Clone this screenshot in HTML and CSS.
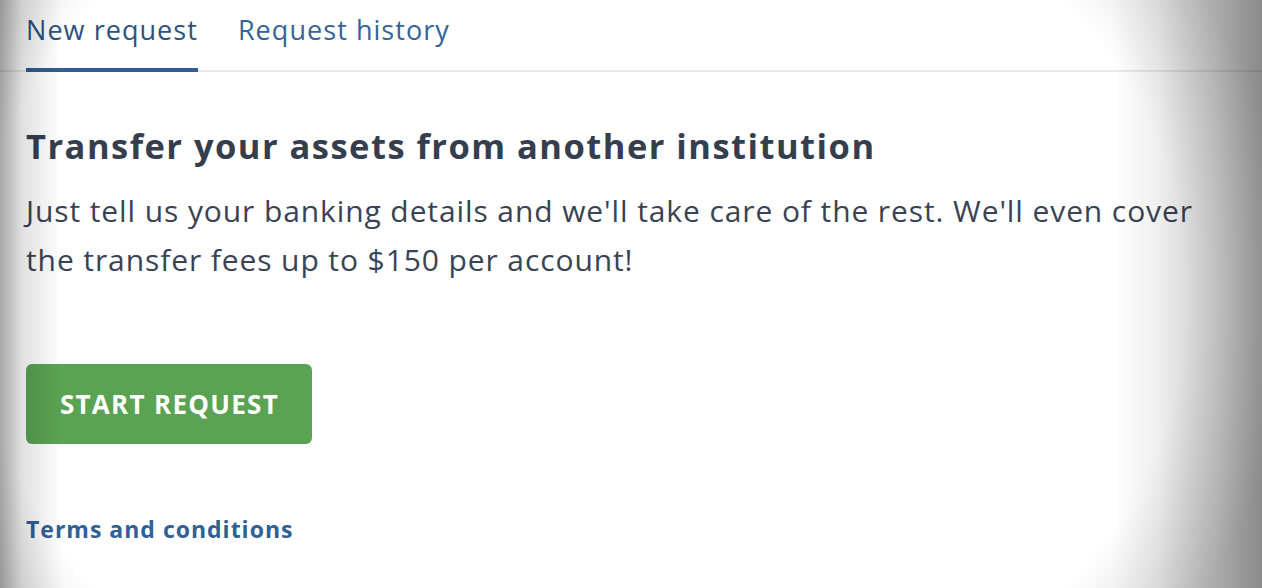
FILE: index.html
```html
<!DOCTYPE html>
<html lang="en">
<head>
<meta charset="utf-8">
<title>Transfer assets</title>
<link rel="stylesheet" href="styles.css">
</head>
<body>
<div class="page">
  <nav class="tabs">
    <a class="tab tab-active" href="#">New request</a>
    <a class="tab" href="#">Request history</a>
  </nav>
  <main class="content">
    <h1 class="title">Transfer your assets from another institution</h1>
    <p class="lead">Just tell us your banking details and we'll take care of the rest. We'll even cover the transfer fees up to $150 per account!</p>
    <button class="btn-start" type="button">START REQUEST</button>
    <a class="terms" href="#">Terms and conditions</a>
  </main>
  <div class="vignette"></div>
</div>
</body>
</html>
```
FILE: styles.css
```css
* { box-sizing: border-box; }
html, body { margin: 0; padding: 0; background: #fff; }
body {
  font-family: "Open Sans", "Noto Sans", sans-serif;
  color: #363f4f;
  width: 1262px;
  height: 588px;
  overflow: hidden;
}
.page {
  position: relative;
  width: 1262px;
  height: 588px;
  background: #fff;
}
.tabs {
  display: flex;
  gap: 40px;
  padding: 0 0 0 26px;
  border-bottom: 2px solid #e8e9ee;
  height: 72px;
}
.tab {
  display: block;
  font-size: 27px;
  line-height: 40px;
  padding-top: 10px;
  letter-spacing: 1.05px;
  color: #35639a;
  text-decoration: none;
  height: 72px;
  margin-bottom: -2px;
}
.tab-active {
  color: #2c5280;
  border-bottom: 4px solid #315d8f;
}
.content {
  padding: 0 26px;
  display: flex;
  flex-direction: column;
  align-items: flex-start;
}
.title {
  margin: 52px 0 0;
  font-size: 34.5px;
  line-height: 44px;
  font-weight: 700;
  letter-spacing: 1.47px;
  color: #353e4e;
}
.lead {
  margin: 18px 0 0;
  font-size: 30px;
  line-height: 49px;
  letter-spacing: 0.9px;
  color: #3a4354;
  max-width: 1195px;
}
.btn-start {
  margin-top: 80px;
  width: 286px;
  height: 80px;
  border: none;
  border-radius: 6px;
  background: #5aa352;
  color: #fff;
  font-family: inherit;
  font-size: 26px;
  font-weight: 700;
  letter-spacing: 1.3px;
  padding: 0 0 0 1px;
  cursor: pointer;
}
.terms {
  margin-top: 69px;
  font-size: 23px;
  font-weight: 700;
  letter-spacing: 1px;
  color: #2f6098;
  text-decoration: none;
}
.vignette {
  position: absolute;
  inset: 0;
  pointer-events: none;
  background:
    linear-gradient(to right, rgba(0,0,0,0.34) 0, rgba(0,0,0,0.12) 22px, rgba(0,0,0,0) 62px),
    linear-gradient(to left, rgba(0,0,0,0.37) 0, rgba(0,0,0,0.22) 45px, rgba(0,0,0,0.06) 105px, rgba(0,0,0,0) 150px),
    radial-gradient(ellipse 720px 580px at 46% 50%, rgba(0,0,0,0) 84%, rgba(0,0,0,0.14) 100%);
}
```
